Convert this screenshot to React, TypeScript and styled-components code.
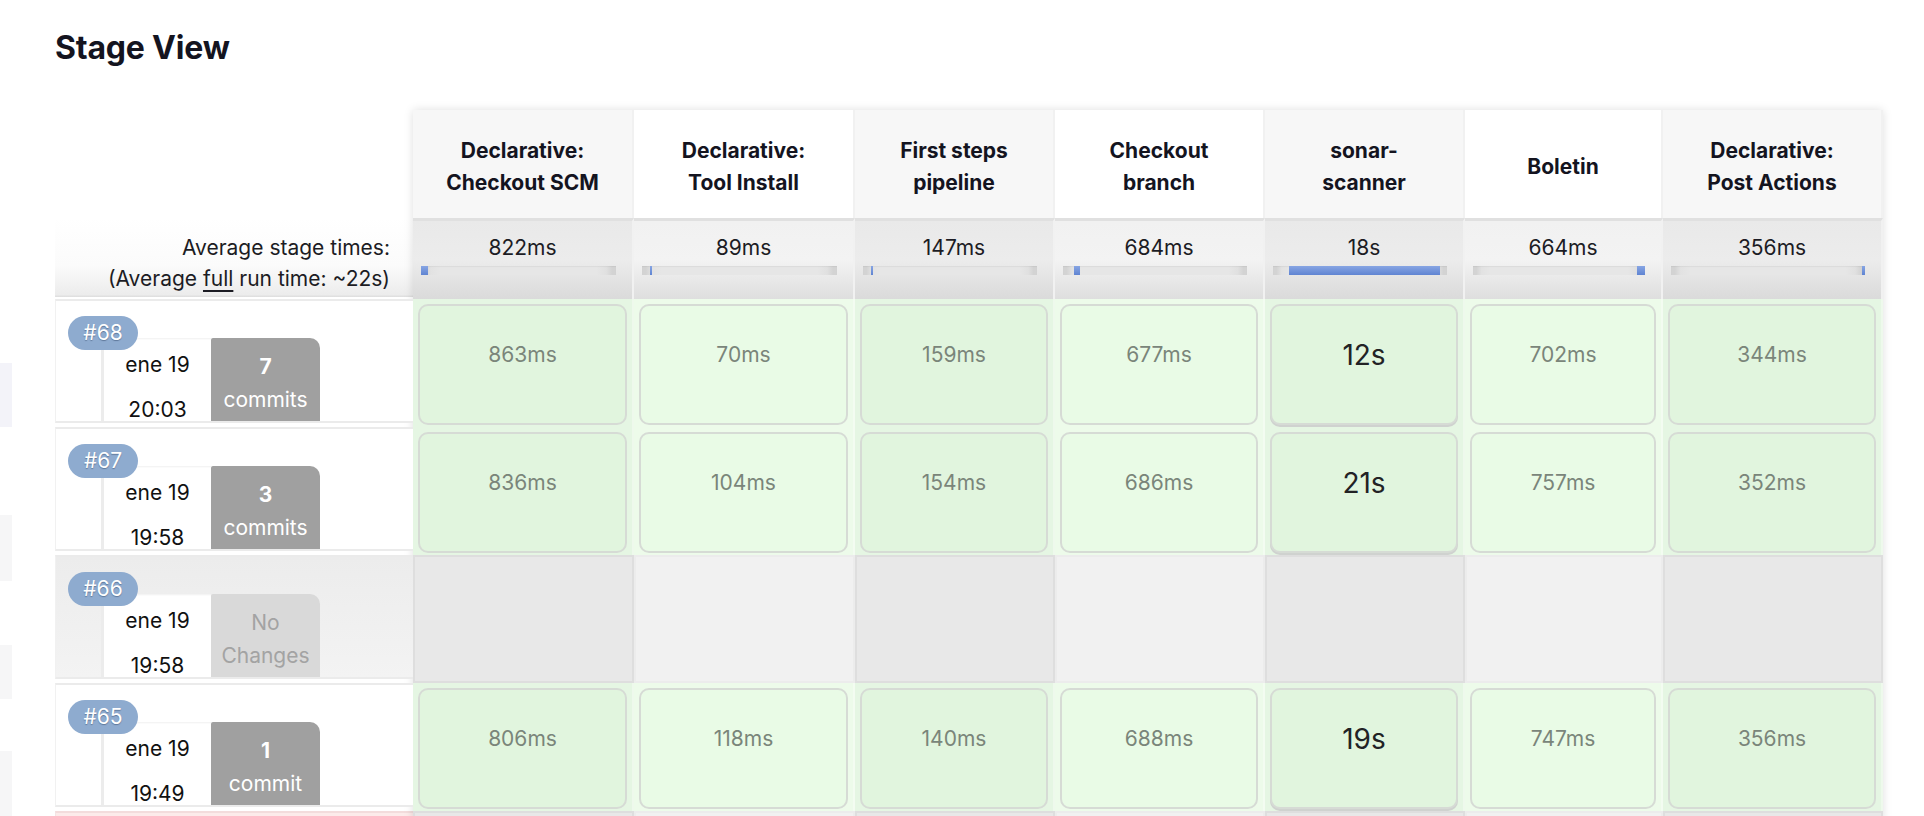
import React from "react";
import styled, { createGlobalStyle, css } from "styled-components";

const GlobalStyle = createGlobalStyle`
  html, body { margin: 0; padding: 0; background: #ffffff; }
  body {
    font-family: Inter, "Noto Sans", "Liberation Sans", sans-serif;
    color: #14141f;
    overflow: hidden;
  }
  * { box-sizing: border-box; }
`;

type Stage = { name: string[]; avg: string; start: number; span: number };
type Build = {
  id: string;
  date: string;
  time: string;
  count?: string;
  label: string[];
  durations: string[] | null;
};

const stages: Stage[] = [
  { name: ["Declarative:", "Checkout SCM"], avg: "822ms", start: 0, span: 3.6 },
  { name: ["Declarative:", "Tool Install"], avg: "89ms", start: 4.2, span: 1.1 },
  { name: ["First steps", "pipeline"], avg: "147ms", start: 4.6, span: 1.1 },
  { name: ["Checkout", "branch"], avg: "684ms", start: 5.9, span: 3.3 },
  { name: ["sonar-", "scanner"], avg: "18s", start: 9, span: 87 },
  { name: ["Boletin"], avg: "664ms", start: 95.2, span: 4.8 },
  { name: ["Declarative:", "Post Actions"], avg: "356ms", start: 98.4, span: 1.6 },
];

const builds: Build[] = [
  { id: "#68", date: "ene 19", time: "20:03", count: "7", label: ["commits"], durations: ["863ms", "70ms", "159ms", "677ms", "12s", "702ms", "344ms"] },
  { id: "#67", date: "ene 19", time: "19:58", count: "3", label: ["commits"], durations: ["836ms", "104ms", "154ms", "686ms", "21s", "757ms", "352ms"] },
  { id: "#66", date: "ene 19", time: "19:58", label: ["No", "Changes"], durations: null },
  { id: "#65", date: "ene 19", time: "19:49", count: "1", label: ["commit"], durations: ["806ms", "118ms", "140ms", "688ms", "19s", "747ms", "356ms"] },
];

const LONG_STAGE = 4;

const sideCards = [
  { top: 363, height: 64, tint: "#f3f3f9" },
  { top: 88, height: 66, tint: "#f6f6f7" },
  { top: 64, height: 54, tint: "#f6f6f7" },
  { top: 52, height: 70, tint: "#f6f6f7" },
];

const Page = styled.div`
  display: flex;
  width: 1924px;
  height: 816px;
  overflow: hidden;
  background: #ffffff;
`;

const Sidebar = styled.aside`
  width: 12px;
  flex: none;
  display: flex;
  flex-direction: column;
`;

const SideCard = styled.div<{ $top: number; $height: number; $tint: string }>`
  margin-top: ${(p) => p.$top}px;
  height: ${(p) => p.$height}px;
  background: ${(p) => p.$tint};
  flex: none;
`;

const Main = styled.main`
  flex: 1;
  padding-left: 43px;
  display: flex;
  flex-direction: column;
`;

const Title = styled.h2`
  margin: 32px 0 0 0;
  font-size: 32px;
  line-height: 32px;
  font-weight: 700;
  letter-spacing: -0.2px;
  color: #14141f;
`;

const StageView = styled.div`
  margin-top: 46px;
  display: flex;
  align-items: flex-start;
`;

const BuildColumn = styled.div`
  width: 358px;
  flex: none;
  display: flex;
  flex-direction: column;
`;

const HeaderSpacer = styled.div`
  height: 108px;
`;

const AverageLabel = styled.div`
  height: 81px;
  padding: 14px 23px 0 0;
  text-align: right;
  font-size: 21px;
  line-height: 31px;
  color: #1c1c24;
  background: linear-gradient(#ffffff 0%, #fbfbfb 60%, #ececec 97%, #dcdcdc 100%);
  border-bottom: 2px solid #ffffff;
`;

const FullLink = styled.span`
  text-decoration: underline;
  text-underline-offset: 4px;
  text-decoration-thickness: 1.5px;
`;

const BuildRow = styled.div`
  height: 128px;
  padding-bottom: 4px;
`;

const BuildCard = styled.div<{ $muted: boolean }>`
  position: relative;
  height: 100%;
  border-top: 2px solid #ebebeb;
  border-bottom: 2px solid #ebebeb;
  border-left: 1px solid #f1f1f1;
  background: ${(p) => (p.$muted ? "linear-gradient(#ececec, #f3f3f3)" : "#ffffff")};
  overflow: hidden;
`;

const PeekCard = styled.div`
  height: 12px;
  border-top: 2px solid #f3dcdc;
  border-left: 1px solid #f3e4e4;
  background: #fcebea;
`;

const Badge = styled.span`
  position: absolute;
  left: 12px;
  top: 15px;
  z-index: 2;
  height: 34px;
  min-width: 70px;
  padding: 0 13px;
  border-radius: 17px;
  background: #8eabcf;
  color: #ffffff;
  font-size: 21px;
  line-height: 34px;
  text-shadow: 0 1px 1px rgba(40, 60, 90, 0.45);
  text-align: center;
`;

const Details = styled.div`
  display: flex;
  margin: 37px 0 0 45px;
  height: 100%;
`;

const DateBox = styled.div`
  width: 110px;
  flex: none;
  background: #ffffff;
  border-left: 3px solid #ececec;
  box-shadow: inset 0 2px 2px -1px #f0f0f0;
  padding-top: 4px;
  text-align: center;
  font-size: 21px;
  line-height: 45px;
  color: #111111;
`;

const ChangesBox = styled.div<{ $empty: boolean }>`
  width: 109px;
  flex: none;
  border-radius: 2px 10px 0 0;
  background: ${(p) => (p.$empty ? "#d9d9d9" : "#a0a0a0")};
  color: ${(p) => (p.$empty ? "#a3a3a3" : "#ffffff")};
  padding-top: 12px;
  text-align: center;
  font-size: 21px;
  line-height: 33px;
`;

const Count = styled.div`
  font-weight: 700;
`;

const StageTable = styled.div`
  display: grid;
  grid-template-columns: 221px 221px 200px 210px 200px 198px 220px;
  width: 1470px;
  flex: none;
  background: #ffffff;
  box-shadow: 0 0 9px rgba(0, 0, 0, 0.13);
`;

const HeaderCell = styled.div<{ $odd: boolean }>`
  height: 108px;
  display: flex;
  flex-direction: column;
  justify-content: center;
  align-items: center;
  padding-top: 5px;
  background: ${(p) => (p.$odd ? "#f7f7f7" : "#ffffff")};
  border-right: 2px solid #f1f1f1;
  font-size: 21px;
  font-weight: 700;
  line-height: 32px;
  color: #14141f;
  text-align: center;
`;

const AverageCell = styled.div<{ $odd: boolean }>`
  height: 81px;
  padding: 14px 16px 0 8px;
  border-top: 3px solid #e0e0e0;
  border-right: 2px solid #f1f1f1;
  background: ${(p) =>
    p.$odd
      ? "linear-gradient(#e9e9e9 0%, #ececec 50%, #dadada 100%)"
      : "linear-gradient(#f1f1f1 0%, #f3f3f3 50%, #dedede 100%)"};
  display: flex;
  flex-direction: column;
`;

const AverageValue = styled.div`
  margin-top: -2px;
  text-align: center;
  padding-left: 8px;
  font-size: 21px;
  line-height: 30px;
  color: #1c1c24;
`;

const Track = styled.div`
  position: relative;
  margin-top: 3px;
  height: 9px;
  background: linear-gradient(
    to right,
    #d3d3d3 0%,
    #d3d3d3 2%,
    #e2e2e2 5%,
    #e6e6e6 10%,
    #e6e6e6 90%,
    #e0e0e0 95%,
    #d3d3d3 98%,
    #d3d3d3 100%
  );
  box-shadow: inset 0 1px 1px rgba(0, 0, 0, 0.05);
`;

const Span = styled.div`
  position: absolute;
  top: 0;
  bottom: 0;
  min-width: 2px;
  background: linear-gradient(#87a5e3, #5f84d2);
`;

const StageCell = styled.div<{ $odd: boolean; $kind: "ok" | "idle" | "peek" }>`
  height: ${(p) => (p.$kind === "peek" ? "12px" : "128px")};
  ${(p) =>
    p.$kind === "ok"
      ? css`
          padding: 5px 5px 2px 5px;
          background: ${p.$odd ? "#e5f6e3" : "#edfbea"};
          border-right: 2px solid ${p.$odd ? "#eef9ec" : "#f3fcf1"};
        `
      : css`
          background: ${p.$odd ? "#e8e8e8" : "#f1f1f1"};
          border: 2px solid ${p.$odd ? "#dedede" : "#ececec"};
        `}
`;

const DurationBox = styled.div<{ $odd: boolean; $long: boolean }>`
  height: 100%;
  border-radius: 10px;
  border: 2px solid #d6dbd5;
  background: ${(p) => (p.$odd ? "#e1f5de" : "#e9fbe6")};
  box-shadow: ${(p) => (p.$long ? "0 2px 0 #cfd2cf" : "none")};
  text-align: center;
  padding-top: ${(p) => (p.$long ? "32px" : "34px")};
  font-size: ${(p) => (p.$long ? "28px" : "21px")};
  line-height: ${(p) => (p.$long ? "34px" : "30px")};
  color: ${(p) => (p.$long ? "#222225" : "#7a857a")};
`;

export default function App() {
  return (
    <Page>
      <GlobalStyle />
      <Sidebar>
        {sideCards.map((c, i) => (
          <SideCard key={i} $top={c.top} $height={c.height} $tint={c.tint} />
        ))}
      </Sidebar>
      <Main>
        <Title>Stage View</Title>
        <StageView>
          <BuildColumn>
            <HeaderSpacer />
            <AverageLabel>
              Average stage times:
              <br />
              (Average <FullLink>full</FullLink> run time: ~22s)
            </AverageLabel>
            {builds.map((b) => (
              <BuildRow key={b.id}>
                <BuildCard $muted={b.durations === null}>
                  <Badge>{b.id}</Badge>
                  <Details>
                    <DateBox>
                      <div>{b.date}</div>
                      <div>{b.time}</div>
                    </DateBox>
                    <ChangesBox $empty={!b.count}>
                      {b.count && <Count>{b.count}</Count>}
                      {b.label.map((l) => (
                        <div key={l}>{l}</div>
                      ))}
                    </ChangesBox>
                  </Details>
                </BuildCard>
              </BuildRow>
            ))}
            <PeekCard />
          </BuildColumn>
          <StageTable>
            {stages.map((s, i) => (
              <HeaderCell key={"h" + i} $odd={i % 2 === 0}>
                {s.name.map((n) => (
                  <div key={n}>{n}</div>
                ))}
              </HeaderCell>
            ))}
            {stages.map((s, i) => (
              <AverageCell key={"a" + i} $odd={i % 2 === 0}>
                <AverageValue>{s.avg}</AverageValue>
                <Track>
                  <Span style={{ left: `${s.start}%`, width: `${s.span}%` }} />
                </Track>
              </AverageCell>
            ))}
            {builds.map((b) =>
              stages.map((s, i) =>
                b.durations ? (
                  <StageCell key={b.id + i} $odd={i % 2 === 0} $kind="ok">
                    <DurationBox $odd={i % 2 === 0} $long={i === LONG_STAGE}>
                      {b.durations[i]}
                    </DurationBox>
                  </StageCell>
                ) : (
                  <StageCell key={b.id + i} $odd={i % 2 === 0} $kind="idle" />
                )
              )
            )}
            {stages.map((s, i) => (
              <StageCell key={"p" + i} $odd={i % 2 === 0} $kind="peek" />
            ))}
          </StageTable>
        </StageView>
      </Main>
    </Page>
  );
}
